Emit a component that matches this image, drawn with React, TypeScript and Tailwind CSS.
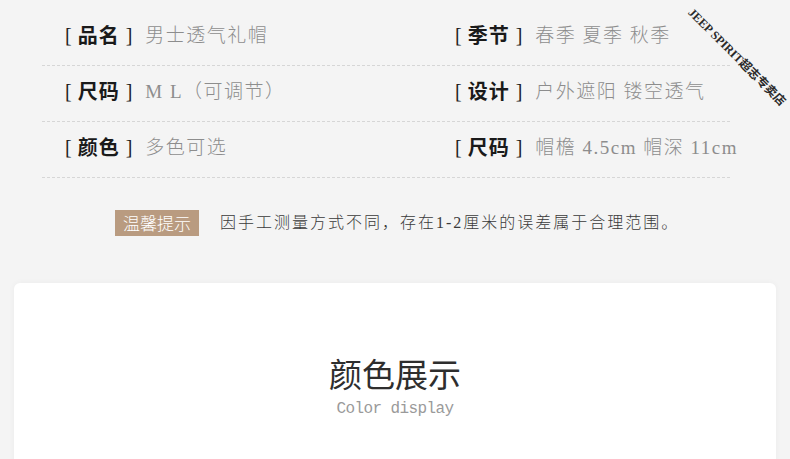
import React from "react"

const serif = "font-['Liberation_Serif','Noto_Sans_CJK_SC',serif]"

type Spec = { label: string; value: string }

const rows: [Spec, Spec][] = [
  [{ label: "品名", value: "男士透气礼帽" }, { label: "季节", value: "春季 夏季 秋季" }],
  [{ label: "尺码", value: "M L（可调节）" }, { label: "设计", value: "户外遮阳 镂空透气" }],
  [{ label: "颜色", value: "多色可选" }, { label: "尺码", value: "帽檐 4.5cm 帽深 11cm" }],
]

function SpecCell({ spec }: { spec: Spec }) {
  return (
    <div className="flex items-center whitespace-nowrap">
      <span className="text-[20px] text-[#222] leading-none">[</span>
      <span className="mx-[6px] text-[20px] font-bold text-[#1a1a1a] tracking-[1px] leading-none font-['Noto_Sans_CJK_SC',sans-serif]">
        {spec.label}
      </span>
      <span className="text-[20px] text-[#222] leading-none">]</span>
      <span className={`ml-[13px] text-[19px] text-[#8d8d8d] tracking-[1.5px] leading-none font-light ${serif}`}>
        {spec.value}
      </span>
    </div>
  )
}

export default function App() {
  return (
    <div className={`relative w-[790px] h-[459px] overflow-hidden bg-[#f4f4f4] ${serif}`}>
      {/* Spec table */}
      <div className="pt-[10px] pl-[42px] w-[730px]">
        {rows.map((pair, i) => (
          <div key={i} className="grid grid-cols-[390px_1fr] h-[56px] items-center pb-[5px] pl-[23px] border-b border-dashed border-[#d6d6d6]">
            <SpecCell spec={pair[0]} />
            <SpecCell spec={pair[1]} />
          </div>
        ))}
      </div>

      {/* Tip */}
      <div className="flex items-center mt-[32px] pl-[115px]">
        <span className="h-[26px] px-[8px] flex items-center bg-[#b99b80] text-white text-[17px] font-light font-['Noto_Sans_CJK_SC',sans-serif]">
          温馨提示
        </span>
        <span className="ml-[21px] text-[16px] text-[#3a3a3a] tracking-[2px] font-light font-['Liberation_Serif','Noto_Sans_CJK_SC',serif]">
          因手工测量方式不同，存在1-2厘米的误差属于合理范围。
        </span>
      </div>

      {/* Colour display card */}
      <div className="mt-[47px] mx-[14px] h-[200px] bg-white rounded-t-[6px] shadow-[0_0_6px_rgba(0,0,0,0.04)] flex flex-col items-center">
        <div className="mt-[74px] text-[33px] leading-none text-[#2e2e2e] font-['Noto_Sans_CJK_SC',serif]">颜色展示</div>
        <div className="mt-[11px] text-[16px] tracking-[-0.6px] leading-none text-[#9a9a9a] font-['Liberation_Mono',monospace]">Color display</div>
      </div>

      {/* Watermark */}
      <div className="absolute left-[662px] top-[48px] w-[150px] text-center rotate-45 text-[12px] font-bold text-[#2a2a2a] whitespace-nowrap font-['Liberation_Serif','Noto_Sans_CJK_SC',serif]">
        JEEP SPIRIT超志专卖店
      </div>
    </div>
  )
}
